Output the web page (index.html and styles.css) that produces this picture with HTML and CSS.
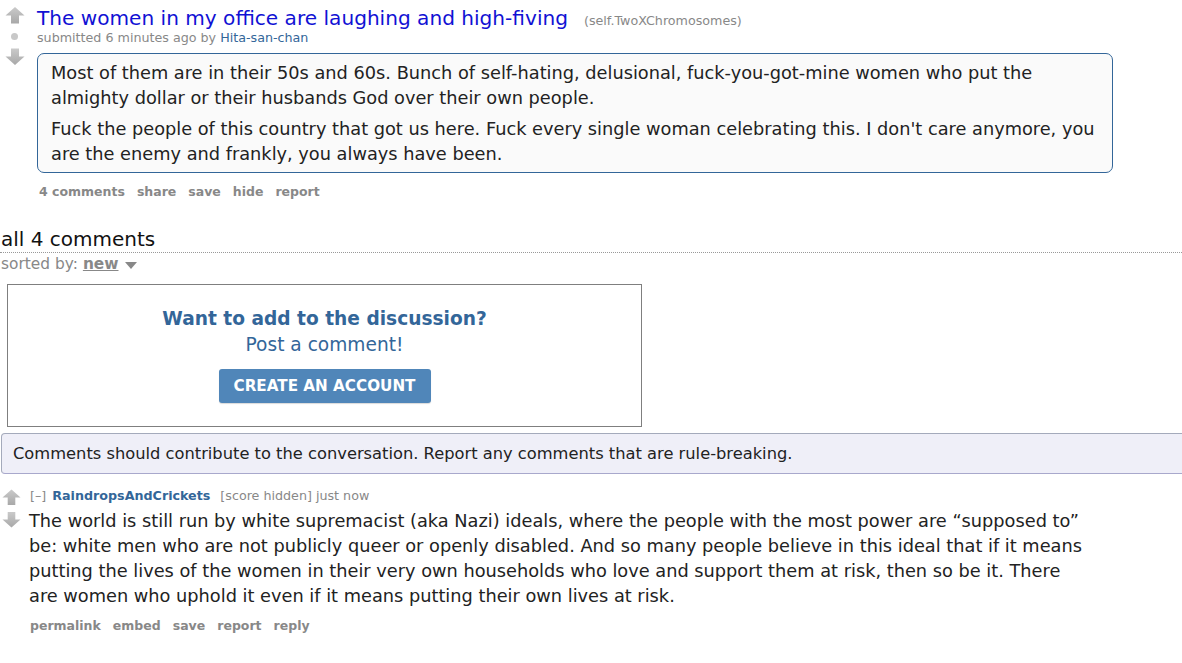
FILE: index.html
```html
<!DOCTYPE html>
<html>
<head>
<meta charset="utf-8">
<link rel="stylesheet" href="styles.css">
</head>
<body>
<div class="post">
  <div class="midcol">
    <svg class="arrow" width="20" height="17" viewBox="0 0 20 17"><defs><linearGradient id="g1" x1="0" y1="0" x2="0" y2="1"><stop offset="0" stop-color="#cacaca"/><stop offset="1" stop-color="#a8a8a8"/></linearGradient></defs><path d="M10 0 L19.5 8.5 L14 8.5 L14 16.5 L6 16.5 L6 8.5 L0.5 8.5 Z" fill="url(#g1)"/></svg>
    <div class="score-dot"></div>
    <svg class="arrow" width="20" height="17" viewBox="0 0 20 17"><path d="M10 17 L19.5 8.5 L14 8.5 L14 0.5 L6 0.5 L6 8.5 L0.5 8.5 Z" fill="url(#g1)"/></svg>
  </div>
  <div class="entry">
    <p class="title"><a class="title-link" href="#">The women in my office are laughing and high-fiving</a><span class="domain">(self.TwoXChromosomes)</span></p>
    <p class="tagline">submitted 6 minutes ago by <a class="author" href="#">Hita-san-chan</a></p>
    <div class="usertext">
      <div class="md">
        <p>Most of them are in their 50s and 60s. Bunch of self-hating, delusional, fuck-you-got-mine women who put the almighty dollar or their husbands God over their own people.</p>
        <p>Fuck the people of this country that got us here. Fuck every single woman celebrating this. I don't care anymore, you are the enemy and frankly, you always have been.</p>
      </div>
    </div>
    <ul class="buttons">
      <li>4 comments</li><li>share</li><li>save</li><li>hide</li><li>report</li>
    </ul>
  </div>
</div>

<div class="commentarea">
  <div class="pane-title">all 4 comments</div>
  <div class="menuarea">sorted by: <span class="sort-selected">new</span><span class="dropdown-arrow"></span></div>

  <div class="login-box">
    <div class="login-head">Want to add to the discussion?</div>
    <div class="login-sub">Post a comment!</div>
    <div class="login-btn">CREATE AN ACCOUNT</div>
  </div>

  <div class="infobar">Comments should contribute to the conversation. Report any comments that are rule-breaking.</div>

  <div class="comment">
    <div class="midcol small">
      <svg class="arrow" width="19" height="17" viewBox="0 0 20 17"><path d="M10 0 L19.5 8.5 L14 8.5 L14 16.5 L6 16.5 L6 8.5 L0.5 8.5 Z" fill="url(#g1)"/></svg>
      <svg class="arrow" width="19" height="17" viewBox="0 0 20 17"><path d="M10 17 L19.5 8.5 L14 8.5 L14 0.5 L6 0.5 L6 8.5 L0.5 8.5 Z" fill="url(#g1)"/></svg>
    </div>
    <div class="entry c-entry">
      <p class="tagline c-tagline"><span class="expand">[–]</span><a class="c-author" href="#">RaindropsAndCrickets</a><span class="score">[score hidden] just now</span></p>
      <div class="md c-md">
        <p>The world is still run by white supremacist (aka Nazi) ideals, where the people with the most power are “supposed to” be: white men who are not publicly queer or openly disabled. And so many people believe in this ideal that if it means putting the lives of the women in their very own households who love and support them at risk, then so be it. There are women who uphold it even if it means putting their own lives at risk.</p>
      </div>
      <ul class="buttons c-buttons">
        <li>permalink</li><li>embed</li><li>save</li><li>report</li><li>reply</li>
      </ul>
    </div>
  </div>
</div>
</body>
</html>
```

FILE: styles.css
```css
html, body {
  margin: 0;
  padding: 0;
  background: #fff;
}
body {
  font-family: "DejaVu Sans", Verdana, sans-serif;
  color: #222;
  width: 1182px;
  overflow: hidden;
}
p { margin: 0; }
a { text-decoration: none; }

.post {
  display: flex;
  padding-top: 6px;
}
.midcol {
  width: 37px;
  flex: none;
  display: flex;
  flex-direction: column;
  align-items: flex-start;
  padding: 1px 0 0 5px;
  box-sizing: border-box;
}
.midcol .arrow { display: block; }
.score-dot {
  width: 7px;
  height: 7px;
  border-radius: 50%;
  background: #c8c8c8;
  margin: 9px 0 8px 6px;
}
.entry {
  flex: 1;
  min-width: 0;
}
.title {
  display: flex;
  align-items: baseline;
  font-size: 20.1px;
  line-height: 24px;
  white-space: nowrap;
}
.title-link { color: #1111d4; }
.domain {
  font-size: 12.7px;
  line-height: 16px;
  color: #888;
  margin-left: 16px;
}
.tagline {
  font-size: 12.7px;
  line-height: 16px;
  color: #888;
}
.author { color: #369; }

.usertext {
  margin-top: 7px;
  width: 1076px;
  box-sizing: border-box;
  border: 1px solid #369;
  border-radius: 7px;
  background: #fafafa;
  padding: 7px 6px 5px 13px;
}
.md {
  max-width: 1062px;
  font-size: 17.75px;
  line-height: 25px;
  color: #222;
}
.md p + p { margin-top: 6px; }

.buttons {
  list-style: none;
  margin: 11px 0 0 0;
  padding: 0 0 0 2px;
  display: flex;
  gap: 12px;
  font-size: 12.5px;
  line-height: 16px;
  font-weight: bold;
  color: #888;
}

.commentarea {
  margin-top: 27px;
}
.pane-title {
  font-size: 20px;
  line-height: 24px;
  padding: 0 0 1px 1px;
  color: #111;
  border-bottom: 1px dotted #999;
}
.menuarea {
  font-size: 15.4px;
  line-height: 20px;
  color: #888;
  padding: 1px 0 0 1px;
  display: flex;
  align-items: center;
}
.menuarea .sort-selected {
  font-weight: bold;
  text-decoration: underline;
  color: #888;
  margin-left: 5px;
}
.dropdown-arrow {
  display: inline-block;
  width: 0;
  height: 0;
  border-left: 6.5px solid transparent;
  border-right: 6.5px solid transparent;
  border-top: 7px solid #888;
  margin-left: 6px;
  margin-top: 2px;
}

.login-box {
  margin: 10px 0 0 7px;
  width: 635px;
  box-sizing: border-box;
  border: 1px solid #7f7f7f;
  padding: 22px 0 23px;
  display: flex;
  flex-direction: column;
  align-items: center;
}
.login-head {
  font-size: 18.6px;
  line-height: 24px;
  font-weight: bold;
  color: #336699;
}
.login-sub {
  font-size: 18.6px;
  line-height: 24px;
  color: #336699;
  margin-top: 2px;
}
.login-btn {
  margin-top: 12px;
  width: 212px;
  height: 34px;
  border-radius: 3px;
  background: #5086b9;
  color: #fff;
  font-weight: bold;
  font-size: 15.2px;
  display: flex;
  align-items: center;
  justify-content: center;
  box-shadow: 0 1px 1px rgba(0,0,0,0.15);
}

.infobar {
  margin: 6px 0 0 1px;
  width: 1200px;
  height: 41px;
  box-sizing: border-box;
  background: #efeff8;
  border: 1px solid #a4aabb;
  border-bottom-color: #a8a8cc;
  border-radius: 4px 0 0 4px;
  padding: 0 11px;
  font-size: 16.3px;
  line-height: 39px;
  color: #222;
}

.comment {
  display: flex;
  margin-top: 14px;
}
.midcol.small {
  width: 29px;
  padding-left: 2px;
  padding-top: 1px;
  gap: 5px;
}
.c-tagline {
  font-size: 12.7px;
  line-height: 16px;
  padding-left: 1px;
}
.expand { color: #888; margin-right: 6px; }
.c-author { color: #369; font-weight: bold; margin-right: 10px; }
.score { color: #888; }
.c-md {
  margin-top: 5px;
}
.c-buttons {
  margin-top: 9px;
  padding-left: 1px;
}
```
